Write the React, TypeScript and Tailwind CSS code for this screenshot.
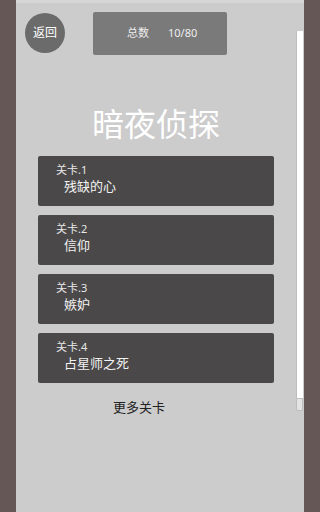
import React from 'react';

const levels = [
  { no: 1, name: '残缺的心' },
  { no: 2, name: '信仰' },
  { no: 3, name: '嫉妒' },
  { no: 4, name: '占星师之死' },
];

const font = { fontFamily: '"Noto Sans", "Noto Sans CJK SC", sans-serif' };

const LevelCard: React.FC<{ no: number; name: string }> = ({ no, name }) => (
  <div className="w-[236px] h-[50px] ml-[22px] rounded-[2px] bg-[#4a4848] pl-[18px] pt-[7px]">
    <p className="text-[11px] leading-[14px] text-[#e8e8e8]">关卡.{no}</p>
    <p className="ml-[8px] text-[13px] leading-[18px] text-[#f2f2f2]">{name}</p>
  </div>
);

export default function App() {
  return (
    <div className="w-[320px] h-[512px] flex overflow-hidden" style={font}>
      <div className="w-4 h-full bg-[#665757]" />
      <div className="relative w-[288px] h-full bg-[#cccccc]">
        <div className="h-[3px] bg-[#d6d6d6]" />
        <div className="flex items-start pt-[9px]">
          <div className="ml-[9px] mt-px w-[40px] h-[40px] rounded-full bg-[#6b6b6b] flex items-center justify-center text-[12px] text-white">
            返回
          </div>
          <div className="ml-[28px] w-[134px] h-[43px] rounded-[2px] bg-[#7a7a7a] flex items-center text-[11px] text-[#eeeeee]">
            <span className="ml-[34px]">总数</span>
            <span className="ml-[19px]">10/80</span>
          </div>
        </div>
        <h1 className="mt-[49px] text-center text-[32px] leading-[40px] text-white pl-[12px] pr-[20px]">暗夜侦探</h1>
        <div className="mt-[12px] flex flex-col gap-[9px]">
          {levels.map((l) => (
            <LevelCard key={l.no} no={l.no} name={l.name} />
          ))}
        </div>
        <p className="mt-[15px] ml-[97px] text-[13px] leading-[18px] text-[#222222]">更多关卡</p>
        <div className="absolute right-px top-[31px] w-[7px] flex flex-col">
          <div className="h-[367px] bg-white border-l border-[#bdbdbd]" />
          <div className="h-[13px] bg-[#e4e4e4] border border-[#bdbdbd] rounded-b-[2px]" />
        </div>
      </div>
      <div className="w-4 h-full bg-[#665757]" />
    </div>
  );
}
